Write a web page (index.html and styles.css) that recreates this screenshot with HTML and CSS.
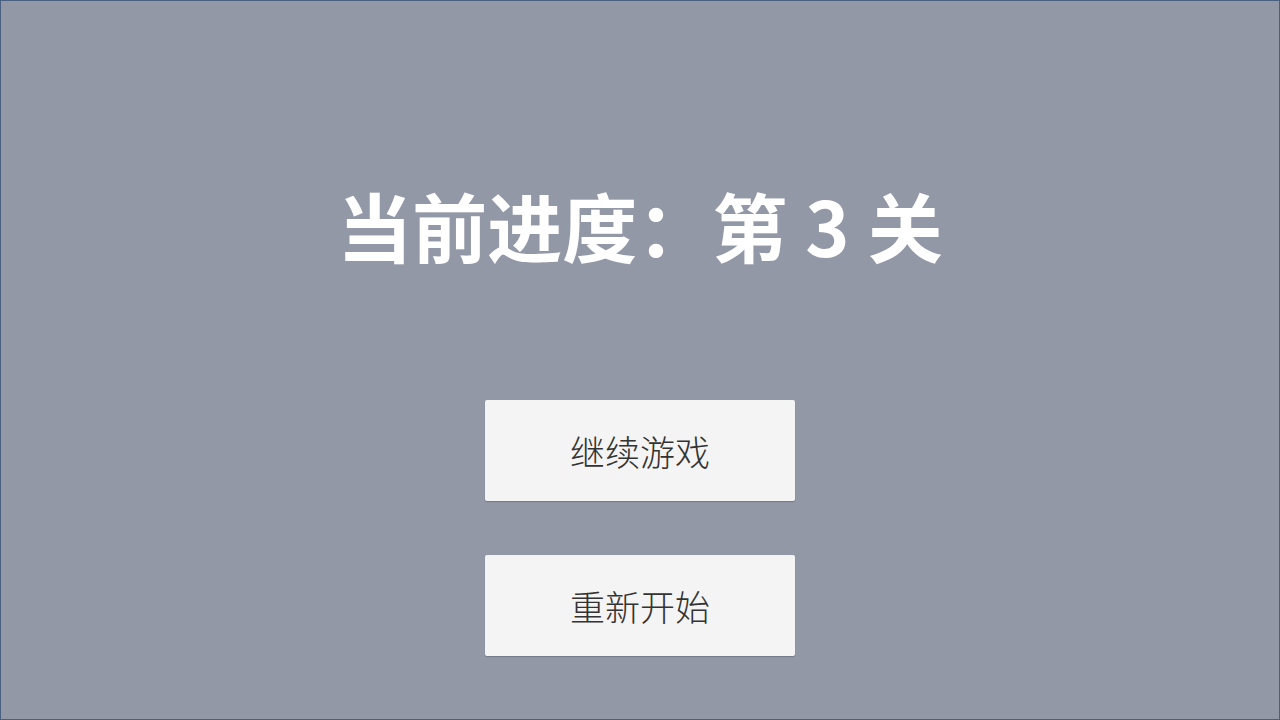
FILE: index.html
```html
<!DOCTYPE html>
<html lang="zh-CN">
<head>
<meta charset="utf-8">
<title>进度</title>
<link rel="stylesheet" href="styles.css">
</head>
<body>
<main class="screen">
  <h1 class="progress">当前进度：第 3 关</h1>
  <div class="menu">
    <button class="btn">继续游戏</button>
    <button class="btn">重新开始</button>
  </div>
</main>
</body>
</html>
```
FILE: styles.css
```css
html, body {
  margin: 0;
  padding: 0;
  width: 1280px;
  height: 720px;
  overflow: hidden;
}
body {
  font-family: "Noto Sans CJK SC", "Noto Sans", sans-serif;
}
.screen {
  box-sizing: border-box;
  width: 1280px;
  height: 720px;
  border: 1px solid #4a6080;
  background: #9398a6;
  display: flex;
  flex-direction: column;
  align-items: center;
  padding-top: 186px;
}
.progress {
  margin: 0;
  font-size: 75px;
  line-height: 1;
  font-weight: 700;
  color: #ffffff;
  white-space: pre;
  word-spacing: 1px;
}
.menu {
  margin-top: 138px;
  display: flex;
  flex-direction: column;
  gap: 54px;
}
.btn {
  width: 310px;
  height: 101px;
  border: none;
  border-radius: 2px;
  background: #f4f4f4;
  box-shadow: 0 1px 1px rgba(60, 70, 90, 0.35);
  font-family: "Noto Sans CJK SC", "Noto Sans", sans-serif;
  font-size: 35px;
  font-weight: 300;
  color: #333333;
  padding: 0;
  line-height: 1;
}
```
